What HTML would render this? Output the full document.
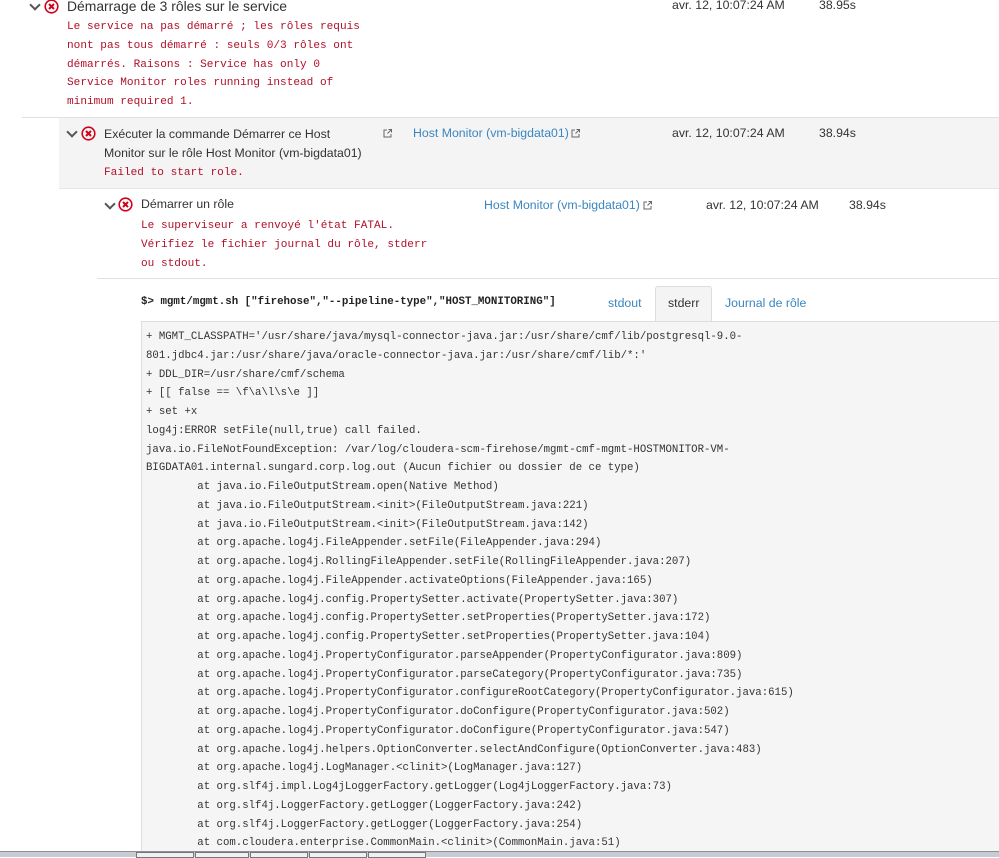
<!DOCTYPE html>
<html><head><meta charset="utf-8"><style>
body{margin:0;width:999px;height:856px;overflow:hidden;background:#fff;font-family:"Liberation Sans",sans-serif;font-size:12.3px;color:#333;position:relative}
.a{position:absolute;white-space:nowrap}
.red{font-family:"Liberation Mono",monospace;font-size:11.1px;color:#b0102a;line-height:18.8px;white-space:pre}
.lnk{color:#3a86c0}
.ic{position:absolute;width:15px;height:15px}
.chev{position:absolute;width:6px;height:6px;border-right:2px solid #555;border-bottom:2px solid #555;transform:rotate(45deg)}
.ext{position:absolute;width:9px;height:9px}
.log{font-family:"Liberation Mono",monospace;font-size:10.7px;line-height:18.75px;color:#333;white-space:pre}
</style></head><body>
<svg width="0" height="0" style="position:absolute"><defs>
<symbol id="x" viewBox="0 0 15 15"><circle cx="7.5" cy="7.5" r="6.3" fill="none" stroke="#d0021b" stroke-width="1.6"/><path d="M5 5L10 10M10 5L5 10" stroke="#d0021b" stroke-width="2"/></symbol>
<symbol id="e" viewBox="0 0 9 9"><path d="M4 1H1V8H8V5" fill="none" stroke="#666" stroke-width="1"/><path d="M4.5 4.5L8.5 0.5M5.5 0.5H8.5V3.5" fill="none" stroke="#666" stroke-width="1"/></symbol>
</defs></svg>
<div class="chev" style="left:31px;top:1px"></div>
<svg class="ic" style="left:44px;top:-1px"><use href="#x"/></svg>
<div class="a" style="left:67px;top:-2px;font-size:13.9px">Démarrage de 3 rôles sur le service</div>
<div class="a red" style="left:67px;top:18px">Le service na pas démarré ; les rôles requis
nont pas tous démarré : seuls 0/3 rôles ont
démarrés. Raisons : Service has only 0
Service Monitor roles running instead of
minimum required 1.</div>
<div class="a" style="left:672px;top:-2px">avr. 12, 10:07:24 AM</div>
<div class="a" style="left:819px;top:-2px">38.95s</div>

<div class="a" style="left:22px;top:117px;width:977px;height:1px;background:#e0e0e0"></div>
<div class="a" style="left:59px;top:118px;width:940px;height:70px;background:#f4f4f4;border-bottom:1px solid #e6e6e6"></div>
<div class="chev" style="left:68px;top:128px"></div>
<svg class="ic" style="left:81px;top:126px"><use href="#x"/></svg>
<div class="a" style="left:104px;top:125px;line-height:19px">Exécuter la commande Démarrer ce Host<br>Monitor sur le rôle Host Monitor (vm-bigdata01)</div>
<div class="a red" style="left:104px;top:164px">Failed to start role.</div>
<svg class="ext" style="left:383px;top:129px"><use href="#e"/></svg>
<div class="a lnk" style="left:413px;top:126px">Host Monitor (vm-bigdata01)</div>
<svg class="ext" style="left:571px;top:129px"><use href="#e"/></svg>
<div class="a" style="left:672px;top:126px">avr. 12, 10:07:24 AM</div>
<div class="a" style="left:819px;top:126px">38.94s</div>

<div class="chev" style="left:106px;top:200px"></div>
<svg class="ic" style="left:118px;top:197px"><use href="#x"/></svg>
<div class="a" style="left:141px;top:197px">Démarrer un rôle</div>
<div class="a red" style="left:141px;top:217px">Le superviseur a renvoyé l'état FATAL.
Vérifiez le fichier journal du rôle, stderr
ou stdout.</div>
<div class="a lnk" style="left:484px;top:198px">Host Monitor (vm-bigdata01)</div>
<svg class="ext" style="left:643px;top:201px"><use href="#e"/></svg>
<div class="a" style="left:706px;top:198px">avr. 12, 10:07:24 AM</div>
<div class="a" style="left:849px;top:198px">38.94s</div>

<div class="a" style="left:97px;top:278px;width:902px;height:1px;background:#e0e0e0"></div>
<div class="a" style="left:141px;top:296px;font-family:'Liberation Mono',monospace;font-size:10.8px;color:#222;font-weight:bold">$&gt; mgmt/mgmt.sh ["firehose","--pipeline-type","HOST_MONITORING"]</div>
<div class="a lnk" style="left:608px;top:296px">stdout</div>
<div class="a" style="left:655px;top:286px;width:55px;height:36px;background:#f4f4f4;border:1px solid #ddd;border-bottom:none;border-radius:3px 3px 0 0"></div>
<div class="a" style="left:668px;top:296px">stderr</div>
<div class="a lnk" style="left:725px;top:296px">Journal de rôle</div>
<div class="a" style="left:141px;top:321px;width:858px;height:535px;background:#f5f5f5;border-left:1px solid #ddd;border-top:1px solid #ddd"></div>
<div class="a log" style="left:146px;top:328px">+ MGMT_CLASSPATH='/usr/share/java/mysql-connector-java.jar:/usr/share/cmf/lib/postgresql-9.0-
801.jdbc4.jar:/usr/share/java/oracle-connector-java.jar:/usr/share/cmf/lib/*:'
+ DDL_DIR=/usr/share/cmf/schema
+ [[ false == \f\a\l\s\e ]]
+ set +x
log4j:ERROR setFile(null,true) call failed.
java.io.FileNotFoundException: /var/log/cloudera-scm-firehose/mgmt-cmf-mgmt-HOSTMONITOR-VM-
BIGDATA01.internal.sungard.corp.log.out (Aucun fichier ou dossier de ce type)
        at java.io.FileOutputStream.open(Native Method)
        at java.io.FileOutputStream.&lt;init&gt;(FileOutputStream.java:221)
        at java.io.FileOutputStream.&lt;init&gt;(FileOutputStream.java:142)
        at org.apache.log4j.FileAppender.setFile(FileAppender.java:294)
        at org.apache.log4j.RollingFileAppender.setFile(RollingFileAppender.java:207)
        at org.apache.log4j.FileAppender.activateOptions(FileAppender.java:165)
        at org.apache.log4j.config.PropertySetter.activate(PropertySetter.java:307)
        at org.apache.log4j.config.PropertySetter.setProperties(PropertySetter.java:172)
        at org.apache.log4j.config.PropertySetter.setProperties(PropertySetter.java:104)
        at org.apache.log4j.PropertyConfigurator.parseAppender(PropertyConfigurator.java:809)
        at org.apache.log4j.PropertyConfigurator.parseCategory(PropertyConfigurator.java:735)
        at org.apache.log4j.PropertyConfigurator.configureRootCategory(PropertyConfigurator.java:615)
        at org.apache.log4j.PropertyConfigurator.doConfigure(PropertyConfigurator.java:502)
        at org.apache.log4j.PropertyConfigurator.doConfigure(PropertyConfigurator.java:547)
        at org.apache.log4j.helpers.OptionConverter.selectAndConfigure(OptionConverter.java:483)
        at org.apache.log4j.LogManager.&lt;clinit&gt;(LogManager.java:127)
        at org.slf4j.impl.Log4jLoggerFactory.getLogger(Log4jLoggerFactory.java:73)
        at org.slf4j.LoggerFactory.getLogger(LoggerFactory.java:242)
        at org.slf4j.LoggerFactory.getLogger(LoggerFactory.java:254)
        at com.cloudera.enterprise.CommonMain.&lt;clinit&gt;(CommonMain.java:51)</div>
<div class="a" style="left:0;top:851px;width:999px;height:5px;background:#c8ccd2;border-top:1px solid #8a9098"></div>
<div class="a" style="left:136px;top:852px;width:56px;height:4px;background:#eef0f3;border:1px solid #777"></div>
<div class="a" style="left:195px;top:852px;width:52px;height:4px;background:#eef0f3;border:1px solid #777"></div>
<div class="a" style="left:250px;top:852px;width:56px;height:4px;background:#eef0f3;border:1px solid #777"></div>
<div class="a" style="left:309px;top:852px;width:56px;height:4px;background:#eef0f3;border:1px solid #777"></div>
<div class="a" style="left:368px;top:852px;width:56px;height:4px;background:#eef0f3;border:1px solid #777"></div>
</body></html>
